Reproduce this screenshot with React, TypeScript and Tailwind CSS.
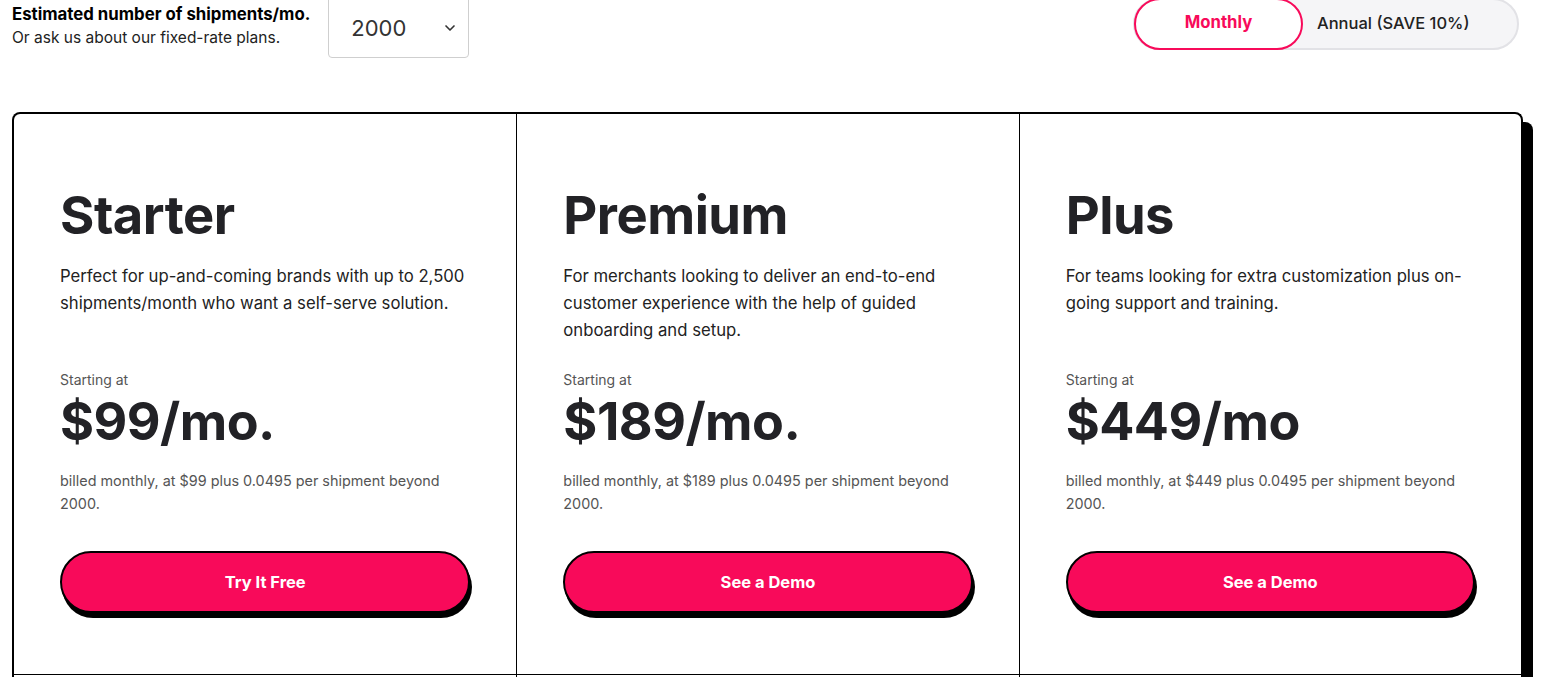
import { ChevronDown } from 'lucide-react'

const plans = [
  {
    name: 'Starter',
    desc: 'Perfect for up-and-coming brands with up to 2,500 shipments/month who want a self-serve solution.',
    price: '$99/mo.',
    billed: 'billed monthly, at $99 plus 0.0495 per shipment beyond 2000.',
    cta: 'Try It Free',
  },
  {
    name: 'Premium',
    desc: 'For merchants looking to deliver an end-to-end customer experience with the help of guided onboarding and setup.',
    price: '$189/mo.',
    billed: 'billed monthly, at $189 plus 0.0495 per shipment beyond 2000.',
    cta: 'See a Demo',
  },
  {
    name: 'Plus',
    desc: 'For teams looking for extra customization plus on-going support and training.',
    price: '$449/mo',
    billed: 'billed monthly, at $449 plus 0.0495 per shipment beyond 2000.',
    cta: 'See a Demo',
  },
]

export default function App() {
  return (
    <main className="min-h-[677px] overflow-hidden bg-white font-['Inter','Liberation_Sans',sans-serif] text-[#222226]">
      {/* Top controls */}
      <div className="flex items-start justify-between pl-3 pr-[26px]">
        <div className="flex items-start">
          <div className="pt-[4px]">
            <div className="text-[16.8px] font-bold leading-[20px] text-black">Estimated number of shipments/mo.</div>
            <div className="mt-[4px] text-[15.5px] leading-[20px] text-[#222]">Or ask us about our fixed-rate plans.</div>
          </div>
          <div className="-mt-[10px] ml-[18px] flex h-[68px] w-[141px] items-center justify-between rounded-[4px] border border-[#cfcfcf] pl-[22px] pr-[10px] pt-[8px]">
            <span className="text-[22px] text-[#333]">2000</span>
            <ChevronDown className="h-4 w-4 text-[#333]" strokeWidth={2.5} />
          </div>
        </div>
        <div className="-mt-[2px] flex h-[52px] w-[386px] items-center rounded-full border-2 border-[#e2e2e6] bg-[#f5f5f7]">
          <div className="-ml-[1px] flex h-[52px] w-[169px] items-center justify-center rounded-full border-2 border-[#f80a5a] bg-white pb-[2px] text-[16.7px] font-bold text-[#f80a5a]">
            Monthly
          </div>
          <div className="ml-[14px] pb-[2px] text-[16.5px] font-medium text-[#222]">Annual (SAVE 10%)</div>
        </div>
      </div>

      {/* Plans card */}
      <section className="ml-3 mr-[22px] mt-[54px] rounded-t-[8px] border-2 border-b-0 border-black shadow-[10px_10px_0_#000]">
        <div className="grid grid-cols-3 border-b border-black">
          {plans.map((p, i) => (
            <div key={p.name} className={`px-[46px] pb-[61px] pt-[72px] ${i > 0 ? 'border-l border-black' : ''}`}>
              <h2 className="text-[52.5px] font-bold leading-[59px] tracking-[-0.5px]">{p.name}</h2>
              <p className="mt-[18px] min-h-[81px] text-[16.7px] leading-[27px] text-[#222]">{p.desc}</p>
              <div className="mt-[26px] text-[14px] leading-[20px] text-[#555]">Starting at</div>
              <div className="mt-[2px] text-[52px] font-bold leading-[59px] tracking-[-0.5px]">{p.price}</div>
              <p className="mt-[18px] text-[14.4px] leading-[23px] text-[#555]">{p.billed}</p>
              <button className="mt-[36px] flex h-[62px] w-full items-center justify-center rounded-full border-2 border-black bg-[#f80a5a] text-[16.5px] font-bold text-white shadow-[2px_5px_0_#000]">
                {p.cta}
              </button>
            </div>
          ))}
        </div>
        <div className="grid h-[120px] grid-cols-3">
          <div />
          <div className="border-l border-black" />
          <div className="border-l border-black" />
        </div>
      </section>
    </main>
  )
}
